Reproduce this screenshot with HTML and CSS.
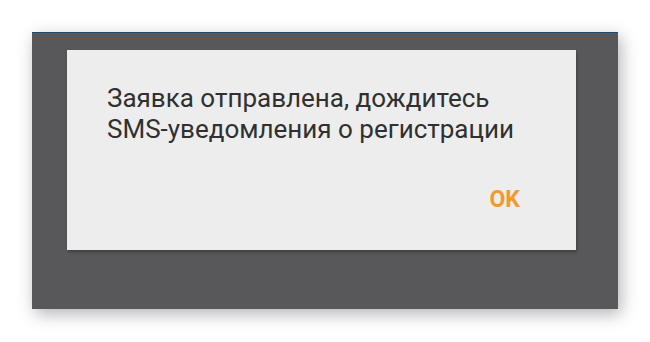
FILE: index.html
```html
<!DOCTYPE html>
<html lang="ru">
<head>
<meta charset="utf-8">
<title>Диалог</title>
<link rel="stylesheet" href="styles.css">
</head>
<body>
<div class="screen">
  <div class="dialog">
    <p class="message">Заявка отправлена, дождитесь<br>SMS-уведомления о регистрации</p>
    <div class="actions">
      <span class="ok">OK</span>
    </div>
  </div>
</div>
</body>
</html>
```

FILE: styles.css
```css
html, body {
  margin: 0;
  padding: 0;
  background: #ffffff;
}
body {
  width: 650px;
  height: 342px;
  overflow: hidden;
  padding-top: 32px;
  padding-left: 32px;
  box-sizing: border-box;
  font-family: Roboto, "Noto Sans", sans-serif;
}
.screen {
  width: 586px;
  height: 277px;
  box-sizing: border-box;
  background: #58585a;
  border-top: 1px solid #1d4a70;
  padding-top: 17px;
  padding-left: 35px;
  box-shadow: 3px 5px 16px rgba(0,0,0,0.3);
}
.dialog {
  width: 509px;
  height: 200px;
  box-sizing: border-box;
  background: #ededee;
  padding: 33px 56px 0 40px;
  display: flex;
  flex-direction: column;
  box-shadow: 1px 2px 3px rgba(0,0,0,0.3);
}
.message {
  margin: 0;
  font-size: 26px;
  line-height: 31px;
  color: #303030;
}
.actions {
  display: flex;
  justify-content: flex-end;
  margin-top: 42px;
}
.ok {
  font-size: 23px;
  font-weight: 700;
  color: #f4992b;
  line-height: 26px;
}
```
